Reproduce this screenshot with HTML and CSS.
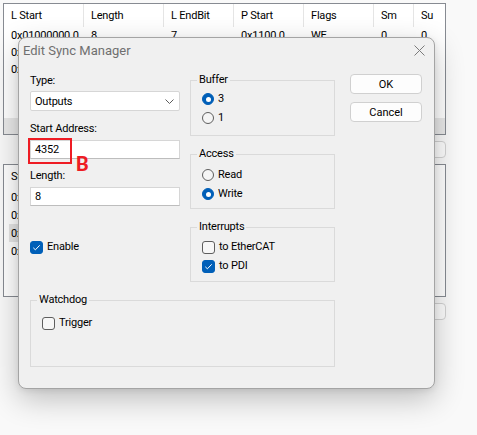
FILE: index.html
```html
<!DOCTYPE html>
<html>
<head>
<meta charset="utf-8">
<link rel="stylesheet" href="styles.css">
</head>
<body>
<div class="desk">
  <div class="list list-top">
    <div class="lrow lhead">
      <span class="cell w80">L Start</span>
      <span class="cell w80">Length</span>
      <span class="cell w70">L EndBit</span>
      <span class="cell w70">P Start</span>
      <span class="cell w70">Flags</span>
      <span class="cell w40">Sm</span>
      <span class="cell wrest">Su</span>
    </div>
    <div class="lrow">
      <span class="cell w80">0x01000000.0</span>
      <span class="cell w80">8</span>
      <span class="cell w70">7</span>
      <span class="cell w70">0x1100.0</span>
      <span class="cell w70">WE</span>
      <span class="cell w40">0</span>
      <span class="cell wrest">0</span>
    </div>
    <div class="lrow"><span class="cell w80">0x</span></div>
    <div class="lrow"><span class="cell w80">0x</span></div>
    <div class="hscroll"></div>
  </div>
  <div class="bar"><span class="bbtn"></span></div>
  <div class="list list-bot">
    <div class="lrow lhead2"><span class="cell w80">St</span></div>
    <div class="lrow r18"><span class="cell w80">0x</span></div>
    <div class="lrow r18"><span class="cell w80">0x</span></div>
    <div class="lrow r18"><span class="cell w80 sel">0x</span></div>
    <div class="lrow r18"><span class="cell w80">0x</span></div>
  </div>
  <div class="bar"><span class="bbtn"></span></div>
</div>

<div class="dlg">
  <div class="titlebar">
    <span class="title">Edit Sync Manager</span>
    <svg class="close" width="11" height="11" viewBox="0 0 11 11"><path d="M0.5 0.5L10.5 10.5M10.5 0.5L0.5 10.5" stroke="#7b7b7b" stroke-width="1" fill="none"/></svg>
  </div>
  <div class="body">
    <div class="col1">
      <div class="lbl">Type:</div>
      <div class="combo">
        <span>Outputs</span>
        <svg width="9" height="5" viewBox="0 0 9 5"><polyline points="0.5,0.5 4.5,4.5 8.5,0.5" stroke="#5c5c5c" stroke-width="1" fill="none"/></svg>
      </div>
      <div class="lbl gap11">Start Address:</div>
      <div class="input">4352</div>
      <div class="lbl gap10">Length:</div>
      <div class="input">8</div>
      <div class="opt enable"><span class="chk on"><svg width="13" height="13" viewBox="0 0 13 13"><path d="M3.3 6.8L5.4 8.8L9.7 4.3" stroke="#fff" stroke-width="1" fill="none"/></svg></span><span>Enable</span></div>
    </div>
    <div class="col2">
      <fieldset class="grp g-buf">
        <legend>Buffer</legend>
        <div class="opt"><span class="rad on"></span><span>3</span></div>
        <div class="opt"><span class="rad"></span><span>1</span></div>
      </fieldset>
      <fieldset class="grp g-acc">
        <legend>Access</legend>
        <div class="opt"><span class="rad"></span><span>Read</span></div>
        <div class="opt"><span class="rad on"></span><span>Write</span></div>
      </fieldset>
      <fieldset class="grp g-int">
        <legend>Interrupts</legend>
        <div class="opt"><span class="chk"></span><span>to EtherCAT</span></div>
        <div class="opt"><span class="chk on"><svg width="13" height="13" viewBox="0 0 13 13"><path d="M3.3 6.8L5.4 8.8L9.7 4.3" stroke="#fff" stroke-width="1" fill="none"/></svg></span><span>to PDI</span></div>
      </fieldset>
    </div>
    <div class="btns">
      <button class="btn">OK</button>
      <button class="btn">Cancel</button>
    </div>
    <fieldset class="grp g-wd">
      <legend>Watchdog</legend>
      <div class="opt"><span class="chk"></span><span>Trigger</span></div>
    </fieldset>
  </div>
</div>

<div class="mark"></div>
<span class="mark-b">B</span>
</body>
</html>
```

FILE: styles.css
```css
* { box-sizing: border-box; }
html, body { margin: 0; }
body {
  width: 477px;
  height: 435px;
  overflow: hidden;
  position: relative;
  background: #f9f9f9;
  font-family: Roboto, "Liberation Sans", sans-serif;
  font-size: 11px;
  letter-spacing: -0.2px;
  color: #000;
}

/* background window */
.desk { padding: 3px 0 0 3px; width: 446px; }
.list {
  background: #fff;
  border: 1px solid #878b92;
  display: flex;
  flex-direction: column;
}
.list-top { height: 132px; }
.list-bot { height: 133px; }
.lrow { display: flex; align-items: center; height: 17px; flex: none; }
.lhead { height: 23px; }
.lhead .cell { height: 23px; display: flex; align-items: center; border-right: 1px solid #e5e5e5; }
.lhead .cell.wrest { border-right: none; }
.lhead2 { height: 23px; }
.r18 { height: 18px; }
.r18 .cell { height: 18px; display: flex; align-items: center; }
.cell.sel { background: #e5e5e5; margin-left: 5px; padding-left: 2px; }
.cell { padding-left: 7px; flex: none; white-space: nowrap; overflow: hidden; }
.w80 { width: 80px; }
.w70 { width: 70px; }
.w40 { width: 40px; }
.wrest { flex: 1; }
.hscroll { margin-top: auto; height: 16px; background: #e9e9e9; }
.bar { height: 29px; display: flex; justify-content: flex-end; padding-top: 6px; }
.bbtn {
  width: 75px;
  height: 17px;
  background: #fdfdfd;
  border: 1px solid #d3d3d3;
  border-radius: 4px;
}

/* dialog */
.dlg {
  position: absolute;
  left: 18px;
  top: 37px;
  width: 417px;
  height: 352px;
  background: #f0f0f0;
  border: 1px solid #a4a4a4;
  border-radius: 8px;
  box-shadow: 0 10px 30px rgba(0, 0, 0, 0.24), 0 2px 6px rgba(0, 0, 0, 0.08);
}
.titlebar {
  height: 24px;
  display: flex;
  align-items: center;
  justify-content: space-between;
  padding: 0 9px 0 4px;
}
.title { font-size: 13px; color: #6f6f6f; letter-spacing: 0; }
.body {
  display: grid;
  grid-template-columns: 150px 145px 77px;
  column-gap: 10px;
  align-items: start;
  padding: 11px 0 0 11px;
}
.col1 { display: flex; flex-direction: column; padding-top: 1px; }
.lbl { line-height: 14px; height: 14px; }
.gap11 { margin-top: 11px; }
.gap10 { margin-top: 10px; }
.combo {
  margin-top: 3px;
  height: 20px;
  background: #fff;
  border: 1px solid #d6d6d6;
  border-radius: 2px;
  display: flex;
  align-items: center;
  justify-content: space-between;
  padding: 0 5px 0 4px;
}
.input {
  margin-top: 4px;
  height: 19px;
  background: #fff;
  border: 1px solid #d6d6d6;
  border-bottom-color: #bdbdbd;
  display: flex;
  align-items: center;
  padding-left: 4px;
}
.enable { margin-top: 34px; }

.opt { display: flex; align-items: center; gap: 4px; height: 14px; line-height: 14px; }
.opt + .opt { margin-top: 5px; }

.rad {
  width: 12px;
  height: 12px;
  border-radius: 50%;
  border: 1px solid #5e5e5e;
  background: #f5f5f5;
  display: flex;
  align-items: center;
  justify-content: center;
  flex: none;
}
.rad.on { background: #005fb8; border-color: #005fb8; }
.rad.on::after {
  content: "";
  width: 5px;
  height: 5px;
  border-radius: 50%;
  background: #fff;
}
.chk {
  width: 13px;
  height: 13px;
  border-radius: 3px;
  border: 1px solid #5e5e5e;
  background: #f7f7f7;
  flex: none;
  display: flex;
}
.chk.on { background: #005fb8; border-color: #005fb8; }
.chk svg { margin: -1px; }

.grp {
  margin: 0;
  min-width: 0;
  border: 1px solid #dadada;
  padding: 0 11px;
}
.grp legend { padding: 0 2px; margin-left: -5px; line-height: 14px; }
.g-buf { padding-top: 5px; padding-bottom: 10px; }
.g-acc { margin-top: 11px; padding-top: 7px; padding-bottom: 7px; }
.g-int { margin-top: 11px; padding-top: 6px; padding-bottom: 8px; }
.g-wd { grid-column: 1 / 3; margin-top: 11px; padding-top: 9px; padding-bottom: 36px; }

.btns { display: flex; flex-direction: column; gap: 8px; padding: 1px 0 0 5px; }
.btn {
  width: 72px;
  height: 20px;
  background: #fdfdfd;
  border: 1px solid #d0d0d0;
  border-radius: 4px;
  font: inherit;
  color: #000;
  padding: 0;
}

/* annotation overlay */
.mark {
  position: absolute;
  left: 28px;
  top: 138px;
  width: 44px;
  height: 26px;
  border: 2px solid #ee1c24;
}
.mark-b {
  position: absolute;
  left: 76px;
  top: 154px;
  font-size: 20px;
  line-height: 20px;
  font-weight: bold;
  color: #ee1c24;
  letter-spacing: 0;
}
```
